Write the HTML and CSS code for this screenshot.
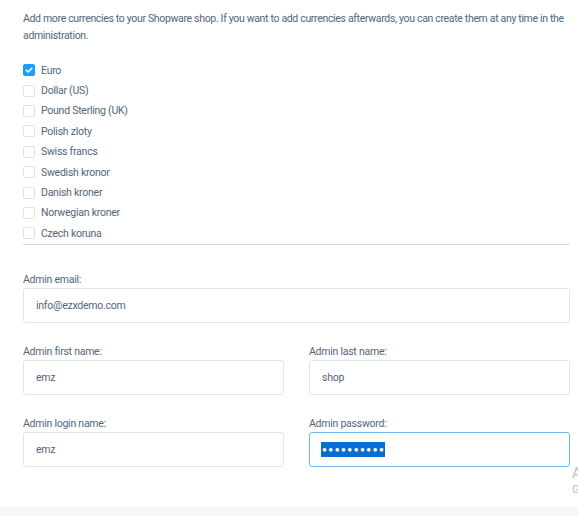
FILE: index.html
```html
<!DOCTYPE html>
<html lang="en">
<head>
<meta charset="utf-8">
<title>Shopware installer</title>
<link rel="stylesheet" href="styles.css">
</head>
<body>
<div class="page">
  <main class="main">
    <p class="intro">Add more currencies to your Shopware shop. If you want to add currencies afterwards, you can create them at any time in the administration.</p>
    <div class="currencies">
      <label class="currency"><span class="box checked"><svg viewBox="0 0 12 12" width="12" height="12"><path d="M3.2 6.2 L5.1 8 L8.8 4.2" fill="none" stroke="#fff" stroke-width="1.6" stroke-linecap="round" stroke-linejoin="round"/></svg></span>Euro</label>
      <label class="currency"><span class="box"></span>Dollar (US)</label>
      <label class="currency"><span class="box"></span>Pound Sterling (UK)</label>
      <label class="currency"><span class="box"></span>Polish zloty</label>
      <label class="currency"><span class="box"></span>Swiss francs</label>
      <label class="currency"><span class="box"></span>Swedish kronor</label>
      <label class="currency"><span class="box"></span>Danish kroner</label>
      <label class="currency"><span class="box"></span>Norwegian kroner</label>
      <label class="currency"><span class="box"></span>Czech koruna</label>
    </div>
    <div class="separator"></div>
    <div class="form">
      <div class="field">
        <div class="label">Admin email:</div>
        <div class="input">info@ezxdemo.com</div>
      </div>
      <div class="row">
        <div class="field">
          <div class="label">Admin first name:</div>
          <div class="input">emz</div>
        </div>
        <div class="field">
          <div class="label">Admin last name:</div>
          <div class="input">shop</div>
        </div>
      </div>
      <div class="row">
        <div class="field">
          <div class="label">Admin login name:</div>
          <div class="input">emz</div>
        </div>
        <div class="field">
          <div class="label">Admin password:</div>
          <div class="input focused"><span class="selected">&#9679;&#9679;&#9679;&#9679;&#9679;&#9679;&#9679;&#9679;&#9679;&#9679;</span></div>
        </div>
      </div>
    </div>
  </main>
  <aside class="side">
    <div class="side-title">A</div>
    <div class="side-sub">G</div>
  </aside>
</div>
<div class="footer"></div>
</body>
</html>
```

FILE: styles.css
```css
html, body {
  margin: 0;
  padding: 0;
  background: #ffffff;
}
body {
  width: 578px;
  height: 516px;
  overflow: hidden;
  font-family: Roboto, "Noto Sans", sans-serif;
  font-size: 10.5px;
  letter-spacing: -0.25px;
  color: #52667a;
}
.page {
  display: flex;
  height: 507px;
  overflow: hidden;
}
.main {
  flex: none;
  width: 547px;
  padding: 10px 0 0 23px;
}
.intro {
  margin: 0;
  line-height: 17px;
  letter-spacing: -0.33px;
}
.currencies {
  margin-top: 16px;
  display: flex;
  flex-direction: column;
}
.currency {
  display: flex;
  align-items: center;
  gap: 6px;
  height: 20.4px;
}
.box {
  flex: none;
  width: 12px;
  height: 12px;
  box-sizing: border-box;
  border: 1px solid #dde3e9;
  border-radius: 2px;
  background: #fff;
  display: flex;
}
.box.checked {
  background: #189eff;
  border-color: #189eff;
}
.box svg {
  margin: -1px;
}
.separator {
  height: 1px;
  background: #d6dce2;
}
.form {
  margin-top: 28px;
  display: flex;
  flex-direction: column;
  gap: 22px;
}
.row {
  display: grid;
  grid-template-columns: 1fr 1fr;
  column-gap: 25px;
}
.label {
  line-height: 14px;
  margin-bottom: 1px;
}
.input {
  box-sizing: border-box;
  height: 35px;
  border: 1px solid #e0e5ea;
  border-radius: 3px;
  background: #fff;
  padding: 0 12px;
  display: flex;
  align-items: center;
}
.input.focused {
  border-color: #6fb6ec;
  padding-left: 11px;
}
.selected {
  background: #0a6ed1;
  color: #fff;
  font-size: 8px;
  letter-spacing: 1.5px;
  line-height: 15px;
  padding: 0 0 0 1px;
}
.side {
  flex: none;
  margin-left: 2px;
  padding-top: 464px;
  color: #b9c0c7;
  letter-spacing: 0;
}
.side-title {
  font-size: 14px;
  line-height: 18px;
}
.side-sub {
  font-size: 11px;
  line-height: 16px;
}
.footer {
  height: 9px;
  background: #f5f7f9;
}
```
